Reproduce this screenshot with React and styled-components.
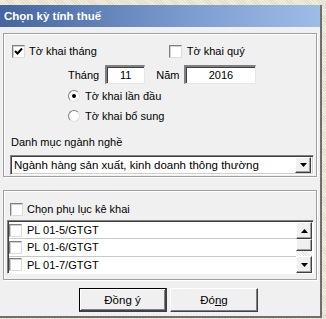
import React from "react";
import styled, { createGlobalStyle } from "styled-components";

const Global = createGlobalStyle`
  body {
    margin: 0;
    background-color: #ebe7d6;
    background-image: repeating-linear-gradient(45deg, #f3efdf 0 1px, #e2ddc8 1px 2px);
    font-family: "Liberation Sans", Arial, sans-serif;
    font-size: 11px;
    color: #000;
  }
`;

const Window = styled.div`
  width: 320px;
  height: 311px;
  margin-top: 5px;
  background: #f0f0f0;
  border-right: 2px solid #6f6f6f;
  border-bottom: 2px solid #6f6f6f;
  display: flex;
  flex-direction: column;
`;

const TitleBar = styled.div`
  height: 22px;
  display: flex;
  align-items: center;
  padding-left: 4px;
  background: linear-gradient(90deg, #46649f 0%, #7d9dd0 60%, #9dbce6 100%);
  color: #fff;
  font-weight: bold;
  font-size: 11.5px;
`;

const Content = styled.div`
  padding: 6px 0 0 3px;
  display: flex;
  flex-direction: column;
`;

const Group = styled.div`
  width: 314px;
  height: ${(p) => p.h}px;
  border: 1px solid #a0a0a0;
  box-shadow: inset 1px 1px 0 #fff, 1px 1px 0 #fff;
  margin-bottom: ${(p) => p.mb || 0}px;
  padding: ${(p) => p.pad};
  box-sizing: border-box;
  display: flex;
  flex-direction: column;
`;

const Row = styled.div`
  display: flex;
  align-items: center;
  height: ${(p) => p.h || 16}px;
  margin-top: ${(p) => p.mt || 0}px;
  padding-left: ${(p) => p.pl || 0}px;
`;

const Check = styled.span`
  width: 13px;
  height: 13px;
  box-sizing: border-box;
  background: #fff;
  border-top: 1px solid #808080;
  border-left: 1px solid #808080;
  border-right: 1px solid #dcdcdc;
  border-bottom: 1px solid #dcdcdc;
  box-shadow: inset 1px 1px 0 #d4d0c8;
  display: inline-flex;
  align-items: center;
  justify-content: center;
  flex-shrink: 0;
  margin-left: ${(p) => p.ml ?? 0}px;
`;

const Label = styled.span`
  margin-left: ${(p) => p.ml ?? 4}px;
  white-space: nowrap;
`;

const Radio = styled.span`
  width: 12px;
  height: 12px;
  box-sizing: border-box;
  border-radius: 50%;
  background: #fff;
  border: 1px solid;
  border-color: #808080 #e0e0e0 #e0e0e0 #808080;
  display: inline-flex;
  align-items: center;
  justify-content: center;
  flex-shrink: 0;
  &::after {
    content: "";
    width: 4px;
    height: 4px;
    border-radius: 50%;
    background: ${(p) => (p.on ? "#000" : "transparent")};
  }
`;

const Field = styled.div`
  width: ${(p) => p.w}px;
  height: 19px;
  box-sizing: border-box;
  background: #fff;
  border-top: 2px solid #808080;
  border-left: 2px solid #808080;
  border-right: 1px solid #e6e6e6;
  border-bottom: 1px solid #e6e6e6;
  box-shadow: inset 1px 1px 0 #404040;
  display: flex;
  align-items: center;
  justify-content: center;
  margin-left: ${(p) => p.ml || 0}px;
`;

const Select = styled.div`
  width: 304px;
  height: 20px;
  margin-left: 6px;
  margin-top: 5px;
  box-sizing: border-box;
  background: #fff;
  border-top: 1px solid #808080;
  border-left: 1px solid #808080;
  border-right: 1px solid #fff;
  border-bottom: 1px solid #fff;
  box-shadow: inset 1px 1px 0 #404040, inset -1px -1px 0 #d4d0c8;
  display: flex;
  align-items: center;
  padding: 2px 2px 2px 3px;
  font-size: 11.5px;
`;

const SelectText = styled.span`
  flex: 1;
  white-space: nowrap;
`;

const ArrowBtn = styled.span`
  width: 16px;
  height: ${(p) => p.h || 16}px;
  box-sizing: border-box;
  background: #f0f0f0;
  border-top: 1px solid #fff;
  border-left: 1px solid #fff;
  border-right: 1px solid #404040;
  border-bottom: 1px solid #404040;
  box-shadow: inset -1px -1px 0 #a0a0a0;
  display: flex;
  align-items: center;
  justify-content: center;
  flex-shrink: 0;
`;

const Tri = ({ up }) => (
  <svg width="7" height="4" viewBox="0 0 7 4">
    <path d={up ? "M3.5 0 L7 4 L0 4 Z" : "M0 0 L7 0 L3.5 4 Z"} fill="#000" />
  </svg>
);

const List = styled.div`
  width: 307px;
  height: 54px;
  margin-top: 3px;
  box-sizing: border-box;
  background: #fff;
  border-top: 1px solid #808080;
  border-left: 1px solid #808080;
  border-right: 1px solid #fff;
  border-bottom: 1px solid #fff;
  box-shadow: inset 1px 1px 0 #404040;
  display: flex;
`;

const Items = styled.div`
  flex: 1;
  display: flex;
  flex-direction: column;
  padding-left: 1px;
  padding-top: 1px;
`;

const Item = styled.div`
  height: 17px;
  display: flex;
  align-items: center;
  border-bottom: ${(p) => (p.last ? "none" : "1px solid #c8c8c8")};
  font-size: 11px;
`;

const ScrollBar = styled.div`
  width: 16px;
  display: flex;
  flex-direction: column;
  padding-top: 1px;
  margin-right: 1px;
`;

const Trough = styled.div`
  flex: 1;
  background-color: #f4f4f4;
  background-image: repeating-linear-gradient(45deg, #fff 0 1px, #e4e4e4 1px 2px);
`;

const Buttons = styled.div`
  display: flex;
  gap: 3px;
  padding-left: 76px;
  margin-top: 8px;
`;

const Button = styled.button`
  width: 88px;
  height: 24px;
  box-sizing: border-box;
  font-family: "Liberation Sans", Arial, sans-serif;
  font-size: 11.5px;
  color: #000;
  background: #f0f0f0;
  padding: 0;
  border-top: 1px solid ${(p) => (p.primary ? "#000" : "#fff")};
  border-left: 1px solid ${(p) => (p.primary ? "#000" : "#fff")};
  border-right: ${(p) => (p.primary ? "2px" : "1px")} solid #404040;
  border-bottom: ${(p) => (p.primary ? "2px" : "1px")} solid #404040;
  box-shadow: ${(p) =>
    p.primary
      ? "inset 1px 1px 0 #fff, inset -1px -1px 0 #808080"
      : "inset -1px -1px 0 #808080"};
  display: flex;
  align-items: center;
  justify-content: center;
`;

const CheckMark = () => (
  <svg width="9" height="9" viewBox="0 0 9 9">
    <path d="M1 4 L3.5 6.5 L8 1.5" stroke="#000" strokeWidth="2" fill="none" />
  </svg>
);

const items = ["PL 01-5/GTGT", "PL 01-6/GTGT", "PL 01-7/GTGT"];

export default function App() {
  return (
    <>
      <Global />
      <Window>
        <TitleBar>Chọn kỳ tính thuế</TitleBar>
        <Content>
          <Group h={144} mb={13} pad="9px 0 0 0">
            <Row pl={8}>
              <Check>
                <CheckMark />
              </Check>
              <Label>Tờ khai tháng</Label>
              <Check ml={72} />
              <Label ml={5}>Tờ khai quý</Label>
            </Row>
            <Row h={19} mt={6} pl={64}>
              <Label ml={0}>Tháng</Label>
              <Field w={40} ml={6}>11</Field>
              <Label ml={11}>Năm</Label>
              <Field w={72} ml={5}>2016</Field>
            </Row>
            <Row mt={4} pl={64}>
              <Radio on />
              <Label ml={5}>Tờ khai lần đầu</Label>
            </Row>
            <Row mt={4} pl={64}>
              <Radio />
              <Label ml={5}>Tờ khai bổ sung</Label>
            </Row>
            <Row mt={10} pl={7}>
              <Label ml={0}>Danh mục ngành nghề</Label>
            </Row>
            <Select>
              <SelectText>Ngành hàng sản xuất, kinh doanh thông thường</SelectText>
              <ArrowBtn h={16}>
                <Tri />
              </ArrowBtn>
            </Select>
          </Group>
          <Group h={90} pad="10px 0 0 3px">
            <Row pl={3}>
              <Check />
              <Label>Chọn phụ lục kê khai</Label>
            </Row>
            <List>
              <Items>
                {items.map((t, i) => (
                  <Item key={t} last={i === items.length - 1}>
                    <Check />
                    <Label ml={5}>{t}</Label>
                  </Item>
                ))}
              </Items>
              <ScrollBar>
                <ArrowBtn h={17}>
                  <Tri up />
                </ArrowBtn>
                <ArrowBtn h={12} />
                <Trough />
                <ArrowBtn h={17}>
                  <Tri />
                </ArrowBtn>
              </ScrollBar>
            </List>
          </Group>
          <Buttons>
            <Button primary>Đồng ý</Button>
            <Button>
              Đó<u>n</u>g
            </Button>
          </Buttons>
        </Content>
      </Window>
    </>
  );
}
